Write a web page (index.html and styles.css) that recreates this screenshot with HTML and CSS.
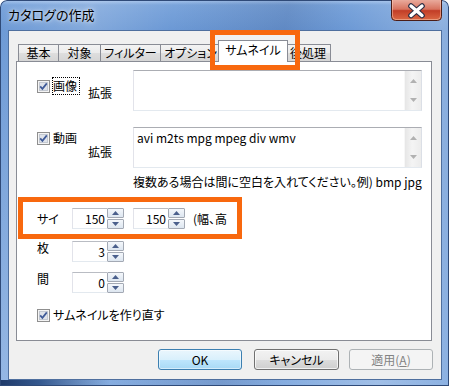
FILE: index.html
```html
<!DOCTYPE html>
<html lang="ja">
<head>
<meta charset="utf-8">
<title>カタログの作成</title>
<link rel="stylesheet" href="styles.css">
</head>
<body>
<div class="window">
  <div class="titlebar">
    <span class="title">カタログの作成</span>
    <div class="close">
      <svg width="51" height="21" viewBox="0 0 51 21">
        <defs>
          <linearGradient id="cg" x1="0" y1="0" x2="0" y2="1">
            <stop offset="0" stop-color="#e9aa9c"/>
            <stop offset="0.45" stop-color="#d7735f"/>
            <stop offset="0.52" stop-color="#c23d27"/>
            <stop offset="1" stop-color="#dc6a45"/>
          </linearGradient>
        </defs>
        <path d="M0.5 0 V16.5 Q0.5 20.5 4.5 20.5 H46.5 Q50.5 20.5 50.5 16.5 V0" fill="url(#cg)" stroke="#4b1d17"/>
        <path d="M1.5 0 V16 Q1.5 19.5 5 19.5 H46 Q49.5 19.5 49.5 16 V0" fill="none" stroke="rgba(255,220,200,0.45)"/>
        <path d="M20 6 L31 15.5 M31 6 L20 15.5" stroke="#2a2d44" stroke-width="5.6" stroke-linecap="round"/>
        <path d="M20 6 L31 15.5 M31 6 L20 15.5" stroke="#ffffff" stroke-width="3.4" stroke-linecap="round"/>
      </svg>
    </div>
  </div>
  <div class="client">
    <div class="tabs">
      <div class="tab t1">基本</div>
      <div class="tab t2">対象</div>
      <div class="tab t3">フィルター</div>
      <div class="tab t4">オプション</div>
      <div class="tab t5 sel">サムネイル</div>
      <div class="tab t6">後処理</div>
    </div>
    <div class="panel">
      <div class="ext-row r1">
        <div class="check">
          <svg class="cb" width="13" height="13" viewBox="0 0 13 13"><rect x="0.5" y="0.5" width="12" height="12" fill="#f4f4f4" stroke="#8f8f8f"/><rect x="2.5" y="2.5" width="8" height="8" fill="#dfe3ea" stroke="#c3c8d1"/><path d="M3.2 6.4 L5.4 8.9 L9.8 3.4" fill="none" stroke="#3f5a98" stroke-width="1.7"/></svg>
          <span class="txt focus">画像</span>
        </div>
        <span class="ext">拡張</span>
        <div class="memo">
          <div class="memo-text"></div>
          <div class="vscroll">
            <div class="sb"><svg width="7" height="4" viewBox="0 0 7 4"><path d="M3.5 0 L7 4 H0 Z" fill="#b1b1b1"/></svg></div>
            <div class="sb"><svg width="7" height="4" viewBox="0 0 7 4"><path d="M0 0 H7 L3.5 4 Z" fill="#b1b1b1"/></svg></div>
          </div>
        </div>
      </div>
      <div class="ext-row r2">
        <div class="check">
          <svg class="cb" width="13" height="13" viewBox="0 0 13 13"><rect x="0.5" y="0.5" width="12" height="12" fill="#f4f4f4" stroke="#8f8f8f"/><rect x="2.5" y="2.5" width="8" height="8" fill="#dfe3ea" stroke="#c3c8d1"/><path d="M3.2 6.4 L5.4 8.9 L9.8 3.4" fill="none" stroke="#3f5a98" stroke-width="1.7"/></svg>
          <span class="txt">動画</span>
        </div>
        <span class="ext">拡張</span>
        <div class="memo">
          <div class="memo-text">avi m2ts mpg mpeg div wmv</div>
          <div class="vscroll">
            <div class="sb"><svg width="7" height="4" viewBox="0 0 7 4"><path d="M3.5 0 L7 4 H0 Z" fill="#b1b1b1"/></svg></div>
            <div class="sb"><svg width="7" height="4" viewBox="0 0 7 4"><path d="M0 0 H7 L3.5 4 Z" fill="#b1b1b1"/></svg></div>
          </div>
        </div>
      </div>
      <p class="hint">複数ある場合は間に空白を入れてください。例) bmp jpg</p>

      <div class="num-row size">
        <span class="lbl">サイ</span>
        <div class="spin">
          <div class="edit">150</div>
          <div class="btns">
            <div class="btn"><svg width="7" height="4" viewBox="0 0 7 4"><path d="M3.5 0 L7 4 H0 Z" fill="#4a5f8c"/></svg></div>
            <div class="btn"><svg width="7" height="4" viewBox="0 0 7 4"><path d="M0 0 H7 L3.5 4 Z" fill="#4a5f8c"/></svg></div>
          </div>
        </div>
        <div class="spin s2">
          <div class="edit">150</div>
          <div class="btns">
            <div class="btn"><svg width="7" height="4" viewBox="0 0 7 4"><path d="M3.5 0 L7 4 H0 Z" fill="#4a5f8c"/></svg></div>
            <div class="btn"><svg width="7" height="4" viewBox="0 0 7 4"><path d="M0 0 H7 L3.5 4 Z" fill="#4a5f8c"/></svg></div>
          </div>
        </div>
        <span class="unit">(幅、高</span>
      </div>

      <div class="num-row top cnt">
        <span class="lbl">枚</span>
        <div class="spin">
          <div class="edit">3</div>
          <div class="btns">
            <div class="btn"><svg width="7" height="4" viewBox="0 0 7 4"><path d="M3.5 0 L7 4 H0 Z" fill="#4a5f8c"/></svg></div>
            <div class="btn"><svg width="7" height="4" viewBox="0 0 7 4"><path d="M0 0 H7 L3.5 4 Z" fill="#4a5f8c"/></svg></div>
          </div>
        </div>
      </div>

      <div class="num-row top gap">
        <span class="lbl">間</span>
        <div class="spin">
          <div class="edit">0</div>
          <div class="btns">
            <div class="btn"><svg width="7" height="4" viewBox="0 0 7 4"><path d="M3.5 0 L7 4 H0 Z" fill="#4a5f8c"/></svg></div>
            <div class="btn"><svg width="7" height="4" viewBox="0 0 7 4"><path d="M0 0 H7 L3.5 4 Z" fill="#4a5f8c"/></svg></div>
          </div>
        </div>
      </div>

      <div class="check remake">
        <svg class="cb" width="13" height="13" viewBox="0 0 13 13"><rect x="0.5" y="0.5" width="12" height="12" fill="#f4f4f4" stroke="#8f8f8f"/><rect x="2.5" y="2.5" width="8" height="8" fill="#dfe3ea" stroke="#c3c8d1"/><path d="M3.2 6.4 L5.4 8.9 L9.8 3.4" fill="none" stroke="#3f5a98" stroke-width="1.7"/></svg>
        <span class="txt">サムネイルを作り直す</span>
      </div>
    </div>
    <div class="buttons">
      <div class="button default">OK</div>
      <div class="button cancel">キャンセル</div>
      <div class="button disabled">適用(<u>A</u>)</div>
    </div>
  </div>
  <div class="mark mark-tab"></div>
  <div class="mark mark-size"></div>
</div>
</body>
</html>
```

FILE: styles.css
```css
* { box-sizing: border-box; }

html, body {
  margin: 0;
  padding: 0;
}

body {
  width: 449px;
  height: 386px;
  overflow: hidden;
  font-family: "Noto Sans CJK JP", "Noto Sans", sans-serif;
  font-size: 12px;
  color: #000;
  font-feature-settings: "palt" 1;
}

.window {
  position: relative;
  width: 449px;
  height: 386px;
  padding: 0 7px 6px 8px;
  border-radius: 7px 7px 0 0;
  box-shadow: inset 0 0 0 1px #2f4a78;
  background:
    linear-gradient(90deg, #1f3a69 0, #35598f 40px, rgba(60,90,140,0) 110px) left bottom / 100% 6px no-repeat,
    linear-gradient(100deg, rgba(255,255,255,0) 0%, rgba(255,255,255,0.16) 18%, rgba(255,255,255,0) 34%, rgba(20,40,90,0.14) 56%, rgba(255,255,255,0) 68%, rgba(255,255,255,0.22) 86%, rgba(255,255,255,0.05) 100%),
    linear-gradient(180deg, #a7c5ec 0, #7aa4db 5px, #6c99d5 30px, #86ade0 100%);
}

.titlebar {
  display: flex;
  align-items: center;
  height: 30px;
}

.title {
  font-size: 13px;
  line-height: 16px;
  color: #000;
  text-shadow: 0 0 6px rgba(255,255,255,0.85), 0 0 3px rgba(255,255,255,0.6);
}

.close {
  margin-left: auto;
  align-self: flex-start;
  width: 51px;
  height: 21px;
}
.close svg { display: block; }

.client {
  width: 434px;
  height: 350px;
  border: 1px solid #4f6f9e;
  background: #f0f0f0;
}

/* tabs */
.tabs {
  display: flex;
  align-items: flex-end;
  height: 21px;
  margin: 9px 0 0 9px;
}

.tab {
  height: 17px;
  margin-left: -1px;
  border: 1px solid #898c95;
  border-bottom: none;
  background: linear-gradient(#f3f3f3, #ebebeb 50%, #dedede 51%, #d5d5d5);
  text-align: center;
  line-height: 15px;
  white-space: nowrap;
  flex: none;
}
.t1 { width: 41px; margin-left: 0; }
.t2 { width: 43px; }
.t3 { width: 61px; }
.t4 { width: 61px; }
.t5 { width: 70px; margin-left: -3px; }
.t6 { width: 46px; margin-left: -3px; }

.tab.sel {
  position: relative;
  z-index: 2;
  height: 22px;
  margin-bottom: -1px;
  background: #ffffff;
  line-height: 17px;
}

/* panel */
.panel {
  margin-left: 7px;
  width: 416px;
  height: 280px;
  border: 1px solid #898c95;
  background: #ffffff;
  padding: 8px 0 0 20px;
}

.ext-row {
  display: flex;
  align-items: flex-start;
  height: 41px;
}
.r2 { margin-top: 16px; }

.check {
  display: flex;
  align-items: center;
}
.cb { flex: none; display: block; }
.check .txt {
  margin-left: 3px;
  line-height: 16px;
  white-space: nowrap;
}
.check .txt.focus {
  margin-left: 2px;
  padding: 0 2px 0 0;
  border: 1px dotted #000;
}

.ext-row .check { width: 51px; }
.r1 .check { margin-top: 7px; }
.r2 .check { margin-top: 3px; height: 16px; }

.ext {
  width: 45px;
  line-height: 16px;
  flex: none;
}
.r1 .ext { margin-top: 15px; }
.r2 .ext { margin-top: 17px; }

.memo {
  display: flex;
  width: 289px;
  height: 41px;
  border: 1px solid;
  border-color: #abadb3 #dbdfe6 #e3e9ef #e2e3ea;
  background: #fff;
}
.memo-text {
  flex: 1;
  padding: 2px 3px;
  line-height: 16px;
  white-space: nowrap;
  overflow: hidden;
}
.vscroll {
  width: 17px;
  display: flex;
  flex-direction: column;
  background: linear-gradient(90deg, #e6e6e6, #f4f4f4 45%, #ececec);
  border-left: 1px solid #f7f7f7;
}
.sb {
  flex: 1;
  display: flex;
  align-items: center;
  justify-content: center;
}
.sb svg { display: block; }

.hint {
  margin: 6px 0 0 96px;
  line-height: 16px;
  white-space: nowrap;
}

/* numeric rows */
.num-row {
  display: flex;
  align-items: center;
  height: 21px;
}
.num-row.size { margin-top: 18px; }
.num-row.cnt { margin-top: 12px; }
.num-row.gap { margin-top: 10px; }
.num-row.top { align-items: flex-start; }
.num-row.top .lbl { margin-top: -1px; }

.lbl {
  width: 35px;
  line-height: 16px;
  flex: none;
}

.spin {
  display: flex;
  width: 52px;
  height: 21px;
  flex: none;
}
.spin.s2 { margin-left: 9px; }
.spin .edit {
  flex: 1;
  border: 1px solid;
  border-color: #b9bcc3 #e2e3ea #e3e9ef #e2e3ea;
  border-right: none;
  background: #fff;
  text-align: right;
  padding-right: 2px;
  line-height: 19px;
}
.spin .btns {
  width: 17px;
  display: flex;
  flex-direction: column;
  justify-content: space-between;
}
.spin .btn {
  height: 10px;
  border: 1px solid #a3a9b4;
  border-radius: 1px;
  background: linear-gradient(#f4f7fb, #dde6f0);
  display: flex;
  align-items: center;
  justify-content: center;
}
.spin .btn svg { display: block; }

.unit {
  margin-left: 8px;
  line-height: 16px;
  white-space: nowrap;
}

.check.remake { margin-top: 14px; height: 16px; }

/* buttons */
.buttons {
  display: flex;
  justify-content: flex-end;
  margin-top: 8px;
  padding-right: 8px;
}
.button {
  height: 21px;
  border: 1px solid #707070;
  border-radius: 3px;
  text-align: center;
  line-height: 19px;
  white-space: nowrap;
}
.button.default {
  width: 84px;
  border-color: #3c7fb1;
  background: linear-gradient(#eaf6fd, #d9f0fc 50%, #bee6fd 51%, #a7d9f5);
  box-shadow: inset 0 0 0 1px rgba(255,255,255,0.5);
}
.button.cancel {
  width: 85px;
  margin-left: 12px;
  background: linear-gradient(#f2f2f2, #ebebeb 50%, #dddddd 51%, #cfcfcf);
  box-shadow: inset 0 0 0 1px rgba(255,255,255,0.7);
}
.button.disabled {
  width: 84px;
  margin-left: 10px;
  border-color: #adb2b5;
  background: #f4f4f4;
  color: #838383;
}
.button u { text-decoration: underline; }

/* annotation frames */
.mark {
  position: absolute;
  border: 5px solid #f8680e;
  pointer-events: none;
}
.mark-tab {
  left: 210px;
  top: 30px;
  width: 90px;
  height: 40px;
}
.mark-size {
  left: 18px;
  top: 197px;
  width: 224px;
  height: 42px;
}
```
